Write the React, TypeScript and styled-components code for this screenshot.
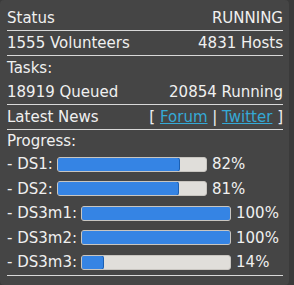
import React from "react";
import styled, { createGlobalStyle } from "styled-components";

const Global = createGlobalStyle`
  html, body { margin: 0; padding: 0; background: #3a3a3a; }
  body { font-family: "DejaVu Sans", Verdana, sans-serif; }
`;

const Panel = styled.div`
  width: 289px;
  height: 285px;
  box-sizing: border-box;
  background: #454545;
  border-radius: 4px;
  padding: 6px 6px 0 7px;
  color: #f0f0f0;
  font-size: 15px;
  line-height: 24px;
`;

const Row = styled.div<{ $line?: boolean; $h?: number }>`
  display: flex;
  justify-content: space-between;
  align-items: center;
  height: ${(p) => p.$h ?? 24}px;
  border-bottom: ${(p) => (p.$line ? "1px solid #d8d8d8" : "none")};
  white-space: nowrap;
`;

const Link = styled.a`
  color: #35a9d6;
  text-decoration: underline;
`;

const ProgRow = styled.div`
  display: flex;
  align-items: center;
  height: 24.5px;
  white-space: nowrap;
`;

const Track = styled.div`
  width: 150px;
  height: 15px;
  box-sizing: border-box;
  margin: 0 5px 0 4px;
  background: #e0deda;
  border: 1px solid #c8c5c0;
  border-radius: 3px;
  overflow: hidden;
  display: flex;
`;

const Fill = styled.div`
  background: #3584e4;
  border: 1px solid #1b5fb2;
  box-sizing: border-box;
  margin: -1px;
  height: calc(100% + 2px);
  border-radius: 3px;
`;

const Divider = styled.div`
  border-bottom: 1px solid #d8d8d8;
`;

const progress = [
  { name: "DS1", pct: 82 },
  { name: "DS2", pct: 81 },
  { name: "DS3m1", pct: 100 },
  { name: "DS3m2", pct: 100 },
  { name: "DS3m3", pct: 14 },
];

export default function App() {
  return (
    <>
      <Global />
      <Panel>
        <Row $line>
          <span>Status</span>
          <span>RUNNING</span>
        </Row>
        <Row $line>
          <span>1555 Volunteers</span>
          <span>4831 Hosts</span>
        </Row>
        <Row>
          <span>Tasks:</span>
        </Row>
        <Row $line>
          <span>18919 Queued</span>
          <span>20854 Running</span>
        </Row>
        <Row $line>
          <span>Latest News</span>
          <span>
            [ <Link href="#">Forum</Link> | <Link href="#">Twitter</Link> ]
          </span>
        </Row>
        <Row $h={22}>
          <span>Progress:</span>
        </Row>
        {progress.map((p) => (
          <ProgRow key={p.name}>
            <span>- {p.name}:</span>
            <Track>
              <Fill style={{ width: `calc(${p.pct}% + 2px)` }} />
            </Track>
            <span>{p.pct}%</span>
          </ProgRow>
        ))}
        <Divider />
      </Panel>
    </>
  );
}
